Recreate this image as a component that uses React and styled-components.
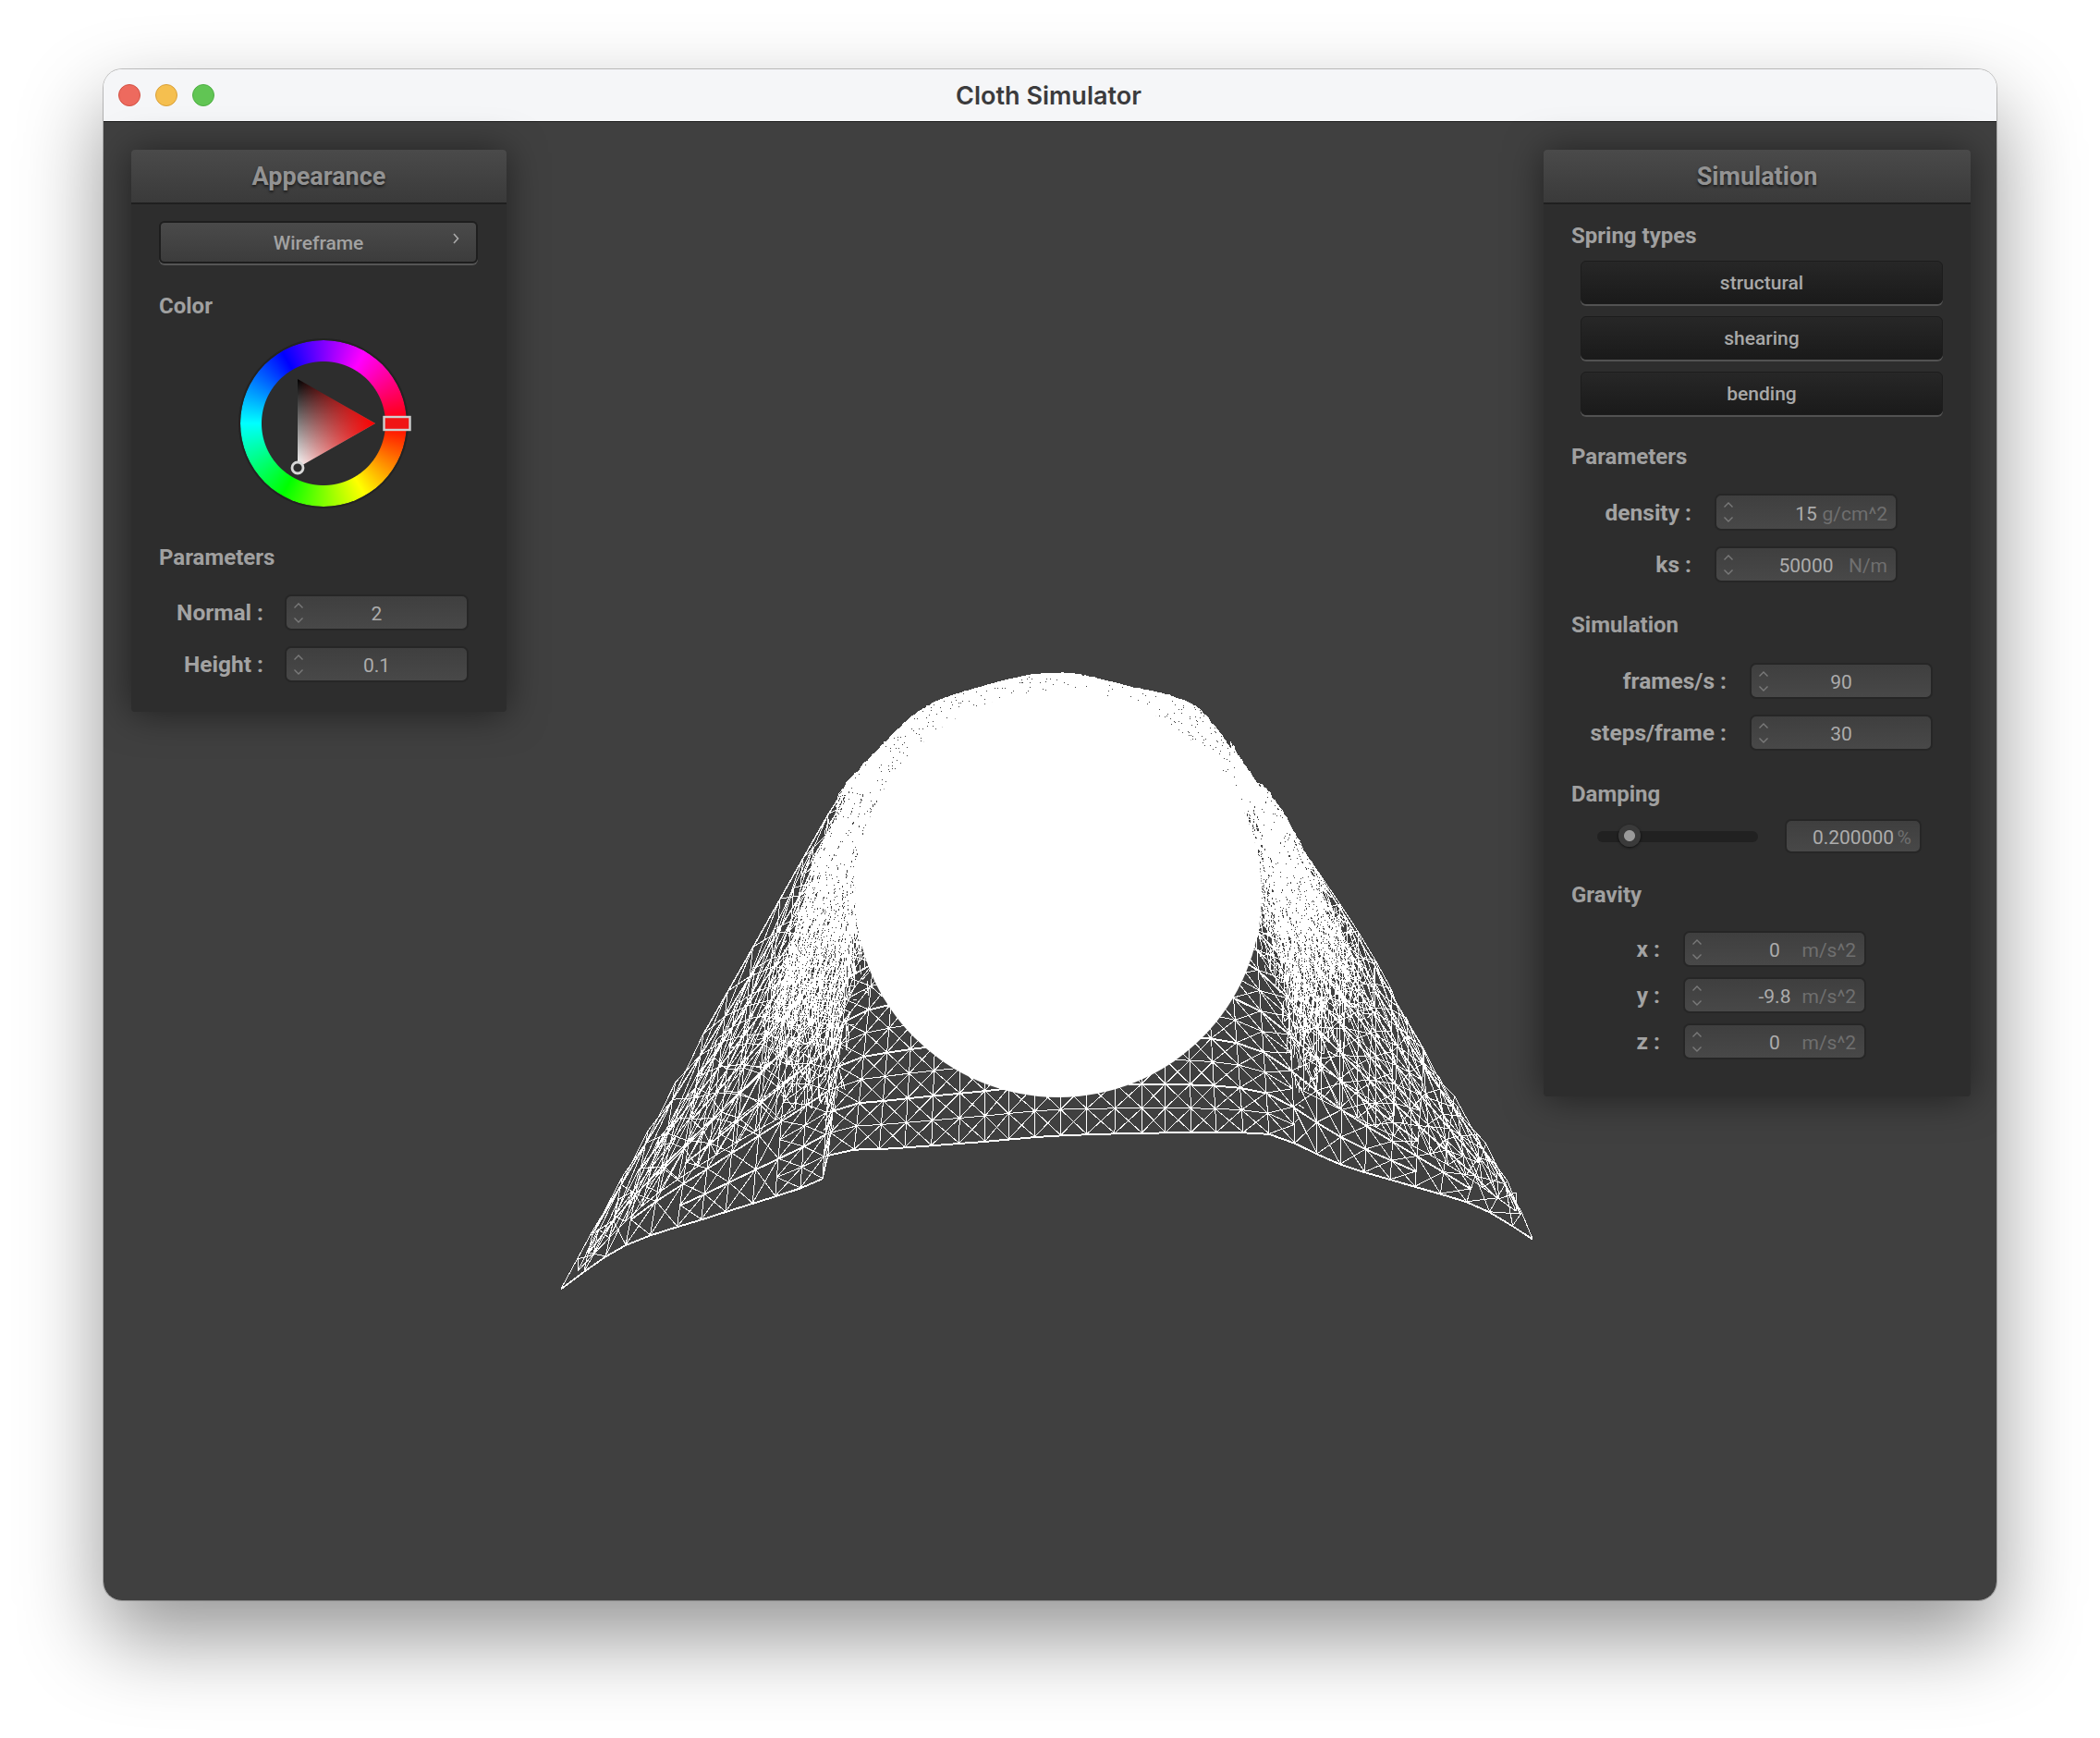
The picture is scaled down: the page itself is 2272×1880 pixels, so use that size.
import React, { useMemo } from "react";
import styled, { createGlobalStyle } from "styled-components";

const GlobalStyle = createGlobalStyle`
  html, body {
    margin: 0;
    background: #fff;
    font-family: Roboto, "Liberation Sans", sans-serif;
  }
`;

// ---- cloth wireframe, all coordinates are page pixels ----

const SPHERE = { x: 1145, y: 967, r: 220 };

const TOP_ARC = [[915, 848], [951, 810], [997, 768], [1058, 744], [1145, 728], [1213, 741], [1291, 763], [1340, 822], [1372, 865]];

const SHEETS = [
  // the cloth itself, each pair goes from hem to silhouette
  {
    cols: 40, rows: 18, doubled: 2, minRow: 20,
    pairs: [
      [607, 1394, 607, 1394], [676, 1347, 700, 1225], [771, 1315, 800, 1050], [871, 1283, 901, 872],
      [896, 1268, 925, 840], [900, 1246, 951, 810], [963, 1242, 997, 768], [1058, 1235, 1058, 744], [1145, 1228, 1145, 728],
      [1254, 1225, 1254, 752], [1330, 1225, 1300, 775], [1380, 1228, 1356, 841], [1450, 1259, 1458, 995],
      [1530, 1283, 1540, 1134], [1600, 1305, 1621, 1259], [1658, 1340, 1658, 1340],
    ],
  },
  // back layer of both wings
  { cols: 12, rows: 14, minRow: 20, pairs: [[625, 1375, 625, 1362], [700, 1300, 720, 1220], [790, 1240, 810, 1060], [860, 1200, 880, 915]] },
  { cols: 12, rows: 14, minRow: 20, pairs: [[1640, 1310, 1640, 1290], [1570, 1262, 1560, 1170], [1480, 1215, 1480, 1025], [1410, 1180, 1410, 920]] },
  // the folds, fine enough to read as stipple, thinned out towards their edges
  { cols: 30, rows: 32, jitter: 1.5, soft: true, pairs: [[800, 1145, 880, 930], [850, 1200, 920, 860], [905, 1250, 960, 800]] },
  { cols: 22, rows: 24, jitter: 1.5, soft: true, pairs: [[850, 1000, 905, 860], [940, 1090, 965, 800]] },
  { cols: 30, rows: 36, jitter: 1.5, soft: true, pairs: [[1400, 1230, 1352, 840], [1450, 1150, 1375, 860], [1505, 1080, 1400, 900]] },
  { cols: 24, rows: 28, jitter: 1.5, soft: true, pairs: [[1365, 1090, 1330, 800], [1470, 1010, 1360, 850]] },
  // band between the sphere and the top of the cloth
  {
    cols: 190, rows: 14, jitter: 0.8,
    pairs: TOP_ARC.map(([x, y]) => {
      const len = Math.hypot(x - SPHERE.x, y - SPHERE.y);
      const k = (SPHERE.r - 4) / len;
      return [SPHERE.x + (x - SPHERE.x) * k, SPHERE.y + (y - SPHERE.y) * k, x, y];
    }),
  },
];

function catmull(a, b, c, d, t) {
  return 0.5 * (2 * b + (c - a) * t + (2 * a - 5 * b + 4 * c - d) * t * t + (3 * b - a - 3 * c + d) * t * t * t);
}

function pairAt(pairs, u) {
  const n = pairs.length - 1;
  const f = Math.min(u * n, n - 1e-6);
  const i = Math.floor(f);
  const p0 = pairs[Math.max(i - 1, 0)];
  const p1 = pairs[i];
  const p2 = pairs[i + 1];
  const p3 = pairs[Math.min(i + 2, n)];
  return p1.map((_, k) => catmull(p0[k], p1[k], p2[k], p3[k], f - i));
}

// columns get an even spacing along the hem, not an even spacing per pair
function hemTable(pairs, cols) {
  const samples = [];
  let total = 0;
  let last = pairAt(pairs, 0);
  for (let i = 0; i <= 400; i++) {
    const p = pairAt(pairs, i / 400);
    total += Math.hypot(p[0] - last[0], p[1] - last[1]);
    samples.push([total, p]);
    last = p;
  }
  const out = [];
  let at = 0;
  for (let c = 0; c <= cols; c++) {
    const want = (total * c) / cols;
    while (at < 400 && samples[at][0] < want) at++;
    out.push(samples[at][1]);
  }
  return out;
}

function buildMesh() {
  let seed = 7;
  const rand = () => {
    seed = (seed * 16807) % 2147483647;
    return seed / 2147483647 - 0.5;
  };
  const parts = [];
  const line = (a, b) => parts.push(`M${a[0].toFixed(1)} ${a[1].toFixed(1)}L${b[0].toFixed(1)} ${b[1].toFixed(1)}`);

  SHEETS.forEach(({ pairs, cols, rows, jitter = 0, doubled = 0, minRow = 0, soft = false }) => {
    const hem = hemTable(pairs, cols);
    const grid = hem.map(([bx, by, tx, ty]) => {
      const col = [];
      for (let r = 0; r <= rows; r++) {
        const t = r / rows;
        col.push([bx + (tx - bx) * t + rand() * jitter * 2, by + (ty - by) * t + rand() * jitter * 2]);
      }
      return col;
    });
    const keep = (c, r) => {
      if (!soft) return true;
      const u = c / cols;
      const p = Math.min(1, (r / rows) * 3) * Math.min(1, u * 5) * Math.min(1, (1 - u) * 5);
      return rand() + 0.5 < p;
    };
    for (let c = 0; c <= cols; c++) {
      for (let r = 0; r < rows; r++) {
        if (keep(c, r)) line(grid[c][r], grid[c][r + 1]);
      }
      if (c === cols) break;
      // short columns near a corner would bunch their rows up, so skip some
      const len = Math.hypot(hem[c][0] - hem[c][2], hem[c][1] - hem[c][3]);
      let step = 1;
      while (minRow && (len / rows) * step < minRow && step < rows) step *= 2;
      for (let r = 0; r <= rows; r += step) {
        const next = Math.min(r + step, rows);
        const p = grid[c][r];
        const q = grid[c + 1][r];
        if (keep(c, r)) line(p, q);
        if (doubled && r % doubled === 0) line([p[0], p[1] + 1], [q[0], q[1] + 1]);
        if (next > r && keep(c, r)) line(p, grid[c + 1][next]);
        if (next > r && keep(c, r)) line(q, grid[c][next]);
      }
    }
  });
  return parts.join("");
}

function ClothView() {
  const mesh = useMemo(buildMesh, []);
  return (
    <ClothSvg viewBox="112 132 2048 1600" width="2048" height="1600">
      <path d={mesh} fill="none" stroke="#fff" strokeWidth="1" shapeRendering="crispEdges" />
      <circle cx={SPHERE.x} cy={SPHERE.y} r={SPHERE.r} fill="#fff" />
    </ClothSvg>
  );
}

// ---- small widgets ----

function SpinArrows() {
  return (
    <Spin viewBox="0 0 12 22" width="12" height="22">
      <path d="M1.5 5.5 L6 1 L10.5 5.5 M1.5 16.5 L6 21 L10.5 16.5" fill="none" stroke="#7a7a7a" strokeWidth="1.4" />
    </Spin>
  );
}

function NumberBox({ value, unit, width = 198, height = 39, spin = true }) {
  return (
    <Box $width={width} $height={height}>
      {spin && <SpinArrows />}
      {value}
      {unit && <Unit>{unit}</Unit>}
    </Box>
  );
}

function Field({ label, labelWidth, gap = 25, ...box }) {
  return (
    <FieldRow $gap={gap}>
      <FieldLabel $width={labelWidth}>{label}</FieldLabel>
      <NumberBox {...box} />
    </FieldRow>
  );
}

function ColorWheel() {
  return (
    <WheelArea>
      <WheelRim />
      <WheelRing />
      <WheelMarks viewBox="0 0 200 200" width="200" height="200">
        <defs>
          <linearGradient id="shade" x1="0" y1="0" x2="0" y2="1">
            <stop offset="0" stopColor="#000" />
            <stop offset="1" stopColor="#fff" />
          </linearGradient>
          <linearGradient id="hue" gradientUnits="userSpaceOnUse" x1="156" y1="0" x2="72" y2="0">
            <stop offset="0" stopColor="#ff0000" />
            <stop offset="1" stopColor="#ff0000" stopOpacity="0" />
          </linearGradient>
        </defs>
        <polygon points="72,52 156,100 72,148" fill="url(#shade)" />
        <polygon points="72,52 156,100 72,148" fill="url(#hue)" />
        <rect x="165.5" y="93" width="28" height="14" fill="#f01515" stroke="#cfcfcf" strokeWidth="2.4" />
        <circle cx="72" cy="148" r="6" fill="#2d2d2d" stroke="#d8d8d8" strokeWidth="2.8" />
      </WheelMarks>
    </WheelArea>
  );
}

export default function App() {
  return (
    <>
      <GlobalStyle />
      <Page>
        <Window>
          <TitleBar>
            <Lights>
              <Light $color="#ed6a5e" $edge="#d25245" />
              <Light $color="#f5bf4f" $edge="#d9a03a" />
              <Light $color="#61c554" $edge="#4fae45" />
            </Lights>
            <WindowTitle>Cloth Simulator</WindowTitle>
          </TitleBar>
          <Viewport>
            <ClothView />

            <Panel $left={30} $width={406} $height={608}>
              <PanelHeader>Appearance</PanelHeader>
              <ModeButton>
                Wireframe
                <ModeChevron viewBox="0 0 8 12" width="8" height="12">
                  <path d="M2 1 L6.5 6 L2 11" fill="none" stroke="#aaa" strokeWidth="1.6" />
                </ModeChevron>
              </ModeButton>
              <GroupLabel $top={31}>Color</GroupLabel>
              <ColorWheel />
              <GroupLabel $top={40}>Parameters</GroupLabel>
              <Fields $top={25} $gap={17}>
                <Field label="Normal :" labelWidth={113} gap={23} value="2" width={199} />
                <Field label="Height :" labelWidth={113} gap={23} value="0.1" width={199} />
              </Fields>
            </Panel>

            <Panel $right={28} $width={462} $height={1024}>
              <PanelHeader>Simulation</PanelHeader>
              <GroupLabel $top={19}>Spring types</GroupLabel>
              <SpringList>
                <SpringButton>structural</SpringButton>
                <SpringButton>shearing</SpringButton>
                <SpringButton>bending</SpringButton>
              </SpringList>

              <GroupLabel $top={30}>Parameters</GroupLabel>
              <Fields $top={25} $gap={17}>
                <Field label="density :" labelWidth={130} value="15" unit="g/cm^2" height={40} />
                <Field label="ks :" labelWidth={130} value="50000" unit="N/m" />
              </Fields>

              <GroupLabel $top={31}>Simulation</GroupLabel>
              <Fields $top={26} $gap={17}>
                <Field label="frames/s :" labelWidth={168} value="90" />
                <Field label="steps/frame :" labelWidth={168} value="30" />
              </Fields>

              <GroupLabel $top={32}>Damping</GroupLabel>
              <SliderRow>
                <Track>
                  <Knob />
                </Track>
                <NumberBox value="0.200000" unit="%" width={148} height={37} spin={false} />
              </SliderRow>

              <GroupLabel $top={30}>Gravity</GroupLabel>
              <Fields $top={24} $gap={11}>
                <Field label="x :" labelWidth={96} value="0" unit="m/s^2" />
                <Field label="y :" labelWidth={96} value="-9.8" unit="m/s^2" />
                <Field label="z :" labelWidth={96} value="0" unit="m/s^2" />
              </Fields>
            </Panel>
          </Viewport>
        </Window>
      </Page>
    </>
  );
}

const Page = styled.div`
  width: 2272px;
  height: 1880px;
  padding: 75px 112px 0;
  box-sizing: border-box;
  overflow: hidden;
`;

const Window = styled.div`
  width: 2048px;
  height: 1656px;
  border-radius: 20px;
  overflow: hidden;
  box-shadow: 0 0 0 1px rgba(0, 0, 0, 0.22), 0 40px 90px rgba(0, 0, 0, 0.42);
`;

const TitleBar = styled.div`
  height: 56px;
  display: grid;
  grid-template-columns: 1fr auto 1fr;
  align-items: center;
  background: #f5f6f8;
  border-bottom: 1px solid #1d1d1d;
`;

const Lights = styled.div`
  display: flex;
  gap: 16px;
  padding-left: 16px;
`;

const Light = styled.span`
  width: 24px;
  height: 24px;
  box-sizing: border-box;
  border-radius: 50%;
  background: ${(p) => p.$color};
  border: 1px solid ${(p) => p.$edge};
`;

const WindowTitle = styled.div`
  font-family: Inter, Roboto, sans-serif;
  font-size: 27px;
  font-weight: 600;
  color: #3b3b3d;
  margin-right: 3px;
`;

const Viewport = styled.div`
  position: relative;
  height: 1600px;
  background: #404040;
`;

const ClothSvg = styled.svg`
  position: absolute;
  inset: 0;
`;

const Panel = styled.div`
  position: absolute;
  top: 30px;
  ${(p) => (p.$left !== undefined ? `left: ${p.$left}px;` : `right: ${p.$right}px;`)}
  width: ${(p) => p.$width}px;
  height: ${(p) => p.$height}px;
  background: #2d2d2d;
  border-radius: 4px;
  box-shadow: 0 2px 40px rgba(0, 0, 0, 0.5);
`;

const PanelHeader = styled.div`
  height: 57px;
  line-height: 59px;
  text-align: center;
  font-size: 27px;
  font-weight: 700;
  color: #939393;
  text-shadow: 0 2px 3px rgba(0, 0, 0, 0.6);
  background: linear-gradient(#4a4a4a, #3a3a3a);
  border-bottom: 2px solid #1f1f1f;
  border-radius: 4px 4px 0 0;
`;

const ModeButton = styled.div`
  position: relative;
  box-sizing: border-box;
  height: 46px;
  margin: 18px 31px 0 30px;
  padding-top: 1px;
  display: flex;
  align-items: center;
  justify-content: center;
  font-size: 21px;
  font-weight: 500;
  color: #a2a2a2;
  border-radius: 6px;
  border: 2px solid #1e1e1e;
  background: linear-gradient(#4a4a4a, #3c3c3c);
  box-shadow: 0 2px 0 #555;
`;

const ModeChevron = styled.svg`
  position: absolute;
  right: 18px;
  top: 11px;
`;

const GroupLabel = styled.div`
  margin: ${(p) => p.$top}px 0 0 30px;
  height: 30px;
  line-height: 30px;
  font-size: 24px;
  font-weight: 700;
  color: #a0a0a0;
`;

const WheelArea = styled.div`
  position: relative;
  width: 180px;
  height: 180px;
  margin: 22px 0 0 118px;
`;

const WheelRim = styled.div`
  position: absolute;
  inset: -2px;
  border-radius: 50%;
  border: 2px solid #232323;
`;

const WheelRing = styled.div`
  position: absolute;
  inset: 0;
  border-radius: 50%;
  background: conic-gradient(from 90deg, #ff0000, #ffff00, #00ff00, #00ffff, #0000ff, #ff00ff, #ff0000);
  mask: radial-gradient(circle, transparent 66.5px, #000 67.5px);
`;

const WheelMarks = styled.svg`
  position: absolute;
  left: -10px;
  top: -10px;
`;

const Fields = styled.div`
  display: flex;
  flex-direction: column;
  gap: ${(p) => p.$gap}px;
  margin: ${(p) => p.$top}px 0 0 30px;
`;

const FieldRow = styled.div`
  display: flex;
  align-items: center;
  gap: ${(p) => p.$gap}px;
`;

const FieldLabel = styled.div`
  width: ${(p) => p.$width}px;
  text-align: right;
  font-size: 24.5px;
  font-weight: 700;
  color: #a3a3a3;
`;

const Box = styled.div`
  position: relative;
  box-sizing: border-box;
  width: ${(p) => p.$width}px;
  height: ${(p) => p.$height}px;
  display: flex;
  align-items: center;
  justify-content: center;
  padding-top: 3px;
  font-size: 21px;
  color: #acacac;
  background: linear-gradient(#3f3f3f, #484848);
  border: 2px solid #262626;
  border-radius: 7px;
`;

const Spin = styled.svg`
  position: absolute;
  left: 7px;
  top: 7px;
`;

const Unit = styled.span`
  position: absolute;
  right: 9px;
  color: #6f6f6f;
`;

const SpringList = styled.div`
  display: flex;
  flex-direction: column;
  gap: 13px;
  margin: 12px 30px 0 40px;
`;

const SpringButton = styled.div`
  box-sizing: border-box;
  height: 47px;
  display: flex;
  align-items: center;
  justify-content: center;
  font-size: 21px;
  font-weight: 500;
  color: #a8a8a8;
  background: linear-gradient(#272727, #1a1a1a);
  border: 1px solid #1c1c1c;
  border-radius: 6px;
  box-shadow: 0 2px 0 #525252;
`;

const SliderRow = styled.div`
  display: flex;
  align-items: center;
  gap: 29px;
  margin: 12px 0 0 58px;
`;

const Track = styled.div`
  position: relative;
  width: 174px;
  height: 12px;
  background: #212121;
  border-radius: 6px;
`;

const Knob = styled.div`
  position: absolute;
  left: 23px;
  top: -7px;
  width: 24px;
  height: 24px;
  box-sizing: border-box;
  border-radius: 50%;
  background: radial-gradient(circle, #9a9a9a 0 5.5px, #3a3a3a 6.5px);
  box-shadow: 0 1px 3px rgba(0, 0, 0, 0.7);
`;
